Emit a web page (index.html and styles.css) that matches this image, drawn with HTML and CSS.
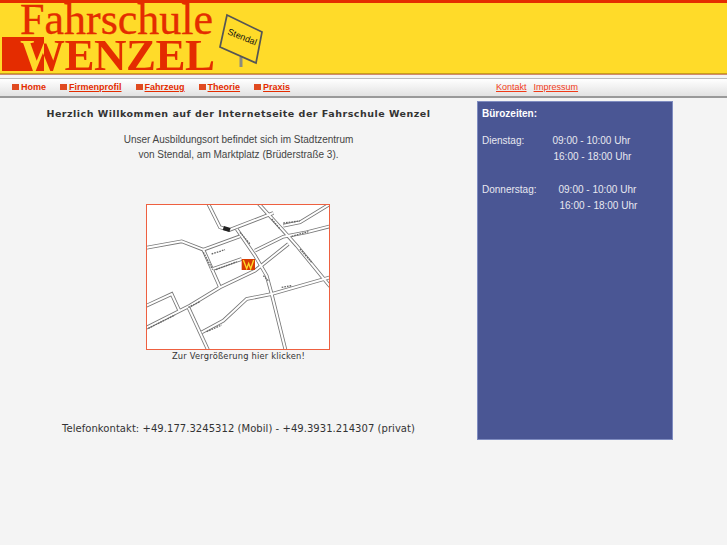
FILE: index.html
```html
<!DOCTYPE html>
<html lang="de">
<head>
  <meta charset="UTF-8" />
  <title>Fahrschule Wenzel</title>
  <link rel="stylesheet" href="styles.css">
</head>
<body>
  <div class="header">
    <div class="logo">
      <div class="logo-top">Fahrschule</div>
      <div class="logo-bottom"><span class="logo-word">WENZEL</span></div>
    </div>
    <svg class="sign" width="50" height="58" viewBox="0 0 50 58">
      <path d="M25 47V57" stroke="#8a8a80" stroke-width="3"/>
      <path d="M11 5L46 22L40 53L4 37Z" fill="#ffdb29" stroke="#555" stroke-width="1.7"/>
      <text x="11" y="24" transform="rotate(22 11 24)" class="sign-text">Stendal</text>
    </svg>
  </div>
  <div class="header-line"></div>

  <div class="nav">
    <div class="nav-main">
      <a class="nav-home"><i></i>Home</a>
      <a><i></i><span>Firmenprofil</span></a>
      <a><i></i><span>Fahrzeug</span></a>
      <a><i></i><span>Theorie</span></a>
      <a><i></i><span>Praxis</span></a>
    </div>
    <div class="nav-side">
      <a>Kontakt</a>
      <a>Impressum</a>
    </div>
  </div>

  <div class="content">
    <div class="main">
      <h1>Herzlich Willkommen auf der Internetseite der Fahrschule Wenzel</h1>
      <p class="intro">Unser Ausbildungsort befindet sich im Stadtzentrum<br>von Stendal, am Marktplatz (Brüderstraße 3).</p>
      <div class="map">
        <svg width="182" height="144" viewBox="21 18 546 432">
          <defs>
            <g id="roads">
              <path d="M15 147L125 127L190 152L240 265"/>
              <path d="M190 152L300 112"/>
              <path d="M205 15L240 85L268 93L400 42"/>
              <path d="M290 90L345 170L380 230L395 285L437 455"/>
              <path d="M352 10L430 95L470 140L570 262"/>
              <path d="M345 155L430 113L500 100L570 82"/>
              <path d="M430 80L480 70L570 15"/>
              <path d="M15 388L150 320L240 265L345 215L445 135"/>
              <path d="M212 212L305 180"/>
              <path d="M15 322L95 285L118 335"/>
              <path d="M145 325L205 455"/>
              <path d="M185 400L250 365L320 300L395 285L570 235"/>
            </g>
          </defs>
          <use href="#roads" class="road-edge"/>
          <use href="#roads" class="road-fill"/>
          <path class="road-label" d="M25 388L105 348M145 325L180 308M200 398L245 378M228 212L290 188M215 165L255 152M300 100L330 135M395 60L420 90M430 72L480 66M455 112L505 98M480 150L515 190M425 265L455 260M370 230L385 245M190 160L218 212"/>
          <path class="road-blot" d="M250 87L270 93"/>
          <rect x="305" y="180" width="40" height="33" fill="#d83c00"/>
          <path d="M310 183L320 209L326 193L332 209L341 183" fill="none" stroke="#ffdb29" stroke-width="4"/>
        </svg>
      </div>
      <p class="map-caption">Zur Vergrößerung hier klicken!</p>
      <p class="phone">Telefonkontakt: +49.177.3245312 (Mobil) - +49.3931.214307 (privat)</p>
    </div>
    <div class="hours">
      <p class="hours-title">Bürozeiten:</p>
      <div class="hours-group">
        <div class="hours-row"><span class="day-short">Dienstag:</span><span>09:00 - 10:00 Uhr</span></div>
        <div class="hours-row"><span class="day-short"></span><span class="later">16:00 - 18:00 Uhr</span></div>
      </div>
      <div class="hours-group">
        <div class="hours-row"><span class="day-long">Donnerstag:</span><span>09:00 - 10:00 Uhr</span></div>
        <div class="hours-row"><span class="day-long"></span><span class="later">16:00 - 18:00 Uhr</span></div>
      </div>
    </div>
  </div>
</body>
</html>
```

FILE: styles.css
```css
body {
  margin: 0;
  background: #f4f4f4;
  color: #333;
  font-family: "Liberation Sans", sans-serif;
  font-size: 10px;
}
.header {
  height: 70px;
  background: #ffdb29;
  border-top: 3px solid #e42c00;
  display: flex;
}
.header-line {
  height: 1px;
  background: #c9a01a;
  border-bottom: 1px solid #d08a70;
  margin-bottom: 3px;
}
.logo {
  width: 213px;
  padding-left: 2px;
  font-family: "Liberation Serif", serif;
  color: #e42c00;
}
.logo-top {
  font-size: 44px;
  line-height: 34px;
  margin-left: 18px;
  -webkit-text-stroke: 0.3px #e42c00;
}
.logo-bottom {
  padding: 1px 0 0 18px;
  background: linear-gradient(#e42c00, #e42c00) no-repeat 0 0 / 42px 34px;
}
.logo-word {
  display: inline-block;
  font-size: 45px;
  font-weight: bold;
  line-height: 34px;
  letter-spacing: -0.5px;
  background: linear-gradient(90deg, #ffdb29 24px, #e42c00 24px);
  -webkit-background-clip: text;
  background-clip: text;
  color: transparent;
}
.sign {
  margin: 7px 0 0 1px;
}
.sign-text {
  font-size: 9px;
  fill: #111;
}
.nav {
  height: 17px;
  border-top: 1px solid #bbb;
  border-bottom: 2px solid #999;
  background: linear-gradient(#fff, #e2e2e2);
  display: flex;
  align-items: center;
}
.nav a {
  color: #e42c00;
}
.nav-main {
  width: 496px;
  padding-left: 12px;
  box-sizing: border-box;
  display: flex;
  gap: 14px;
  font-size: 9px;
  font-weight: bold;
  margin-top: -1px;
}
.nav-main span {
  text-decoration: underline;
}
.nav-main i {
  display: inline-block;
  width: 7px;
  height: 6px;
  margin-right: 2px;
  background: #e04a20;
}
.nav-side {
  display: flex;
  gap: 7px;
  font-size: 9px;
  margin-top: -2px;
}
.nav-side a {
  color: #f03a18;
  text-decoration: underline;
}
.content {
  display: flex;
  margin-top: 3px;
}
.main {
  width: 477px;
  text-align: center;
}
h1 {
  margin: 0;
  padding-top: 6px;
  font-family: "DejaVu Sans", sans-serif;
  font-size: 9.5px;
  letter-spacing: 0.5px;
  line-height: 13px;
}
.intro {
  margin: 12px 0 0;
  line-height: 15px;
  color: #444;
}
.map {
  width: 182px;
  height: 144px;
  margin: 42px 0 0 146px;
  border: 1px solid #ee6040;
  background: #fff;
  display: flex;
}
.road-edge {
  fill: none;
  stroke: #777;
  stroke-width: 11;
}
.road-fill {
  fill: none;
  stroke: #fff;
  stroke-width: 6;
}
.road-label {
  fill: none;
  stroke: #666;
  stroke-width: 4;
  stroke-dasharray: 5 3;
}
.road-blot {
  fill: none;
  stroke: #222;
  stroke-width: 12;
}
.map-caption {
  margin: 1px 0 0;
  font-family: "DejaVu Sans", sans-serif;
  font-size: 8.3px;
  letter-spacing: 0.2px;
  line-height: 11px;
}
.phone {
  margin: 60px 0 0;
  font-family: "DejaVu Sans", sans-serif;
  font-size: 10px;
  letter-spacing: 0.05px;
  line-height: 14px;
}
.hours {
  width: 190px;
  height: 337px;
  background: #4a5694;
  border: 1px solid #7f8cc0;
  color: #fff;
  padding-left: 4px;
}
.hours-title {
  margin: 0;
  padding-top: 4px;
  font-weight: bold;
  line-height: 15px;
}
.hours-group {
  margin-top: 18px;
}
.hours-title + .hours-group {
  margin-top: 12px;
}
.hours-row {
  display: flex;
  height: 15.5px;
  line-height: 15.5px;
  color: #e8e8f0;
}
.day-short {
  width: 70.5px;
}
.day-long {
  width: 76.5px;
}
.later {
  margin-left: 1px;
}
```
